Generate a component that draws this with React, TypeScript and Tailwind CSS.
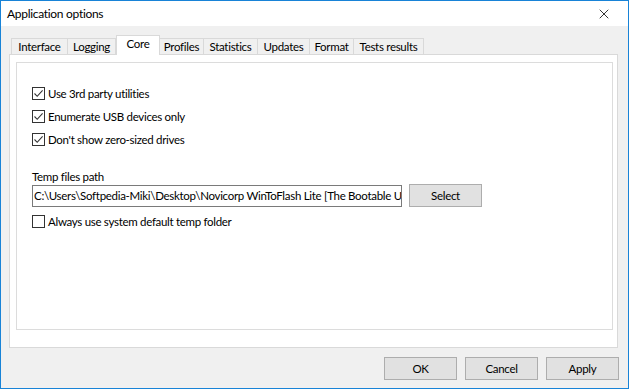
import { X } from 'lucide-react';

const tabs = [
  { label: 'Interface', w: 'w-[57px]' },
  { label: 'Logging', w: 'w-[49px]' },
  { label: 'Core', w: 'w-[44px]' },
  { label: 'Profiles', w: 'w-[45px]' },
  { label: 'Statistics', w: 'w-[55px]' },
  { label: 'Updates', w: 'w-[53px]' },
  { label: 'Format', w: 'w-[45px]' },
  { label: 'Tests results', w: 'w-[71px]' },
];

function CheckBox({ checked, label }: { checked: boolean; label: string }) {
  return (
    <div className="flex h-[23px] items-center">
      <span className="flex h-[13px] w-[13px] items-center justify-center border border-[#333333] bg-white">
        {checked && (
          <svg width="11" height="11" viewBox="0 0 11 11">
            <path d="M1.5 5.5 L4.2 8.3 L9.6 2.3" fill="none" stroke="#333333" strokeWidth="1.1" />
          </svg>
        )}
      </span>
      <span className="ml-[3px] text-[#000]">{label}</span>
    </div>
  );
}

function Button({ label }: { label: string }) {
  return (
    <button className="flex h-[23px] w-[73px] items-center justify-center border border-[#adadad] bg-[#e1e1e1] text-black">
      {label}
    </button>
  );
}

export default function App() {
  return (
    <div
      className="flex h-[389px] w-[629px] flex-col border border-[#1883d7] bg-[#f0f0f0] text-[11.5px] tracking-[-0.3px] text-black"
      style={{ fontFamily: '"Segoe UI", Lato, sans-serif' }}
    >
      {/* Title bar */}
      <div className="flex h-[25px] items-center justify-between bg-white pl-[6px] pr-[16px]">
        <span className="text-[12px] text-black">Application options</span>
        <X className="h-[16px] w-[16px] text-black" strokeWidth={1.2} />
      </div>

      {/* Tabs */}
      <div className="flex items-end whitespace-nowrap pl-[9px] pt-[9px]">
        {tabs.map((t) =>
          t.label === 'Core' ? (
            <div
              key={t.label}
              className={`relative z-10 -mb-px flex h-[20px] items-center justify-center border border-b-0 border-[#d9d9d9] bg-white ${t.w}`}
            >
              <span className="-mt-[3px]">{t.label}</span>
            </div>
          ) : (
            <div
              key={t.label}
              className={`-ml-px flex h-[16px] items-center justify-center border border-b-0 border-[#d9d9d9] bg-[#f0f0f0] first:ml-px ${t.w}`}
            >
              {t.label}
            </div>
          )
        )}
      </div>

      {/* Panel */}
      <div className="ml-[8px] h-[294px] w-[609px] border border-[#d9d9d9] bg-white px-[6px] pt-[7px]">
        <div className="h-[268px] w-[597px] border border-[#dcdcdc] pl-[15px] pt-[19px]">
          <CheckBox checked label="Use 3rd party utilities" />
          <CheckBox checked label="Enumerate USB devices only" />
          <CheckBox checked label="Don't show zero-sized drives" />

          <div className="mt-[18px] leading-[15px]">Temp files path</div>
          <div className="flex items-center">
            <div className="h-[22px] w-[370px] overflow-hidden border border-[#7a7a7a] bg-white pl-[1px] leading-[20px] whitespace-nowrap">
              C:\Users\Softpedia-Miki\Desktop\Novicorp WinToFlash Lite [The Bootable US
            </div>
            <div className="ml-[7px]">
              <Button label="Select" />
            </div>
          </div>
          <div className="mt-[3px]">
            <CheckBox checked={false} label="Always use system default temp folder" />
          </div>
        </div>
      </div>

      {/* Bottom buttons */}
      <div className="mt-[9px] flex justify-end gap-[8px] pr-[9px]">
        <Button label="OK" />
        <Button label="Cancel" />
        <Button label="Apply" />
      </div>
    </div>
  );
}
